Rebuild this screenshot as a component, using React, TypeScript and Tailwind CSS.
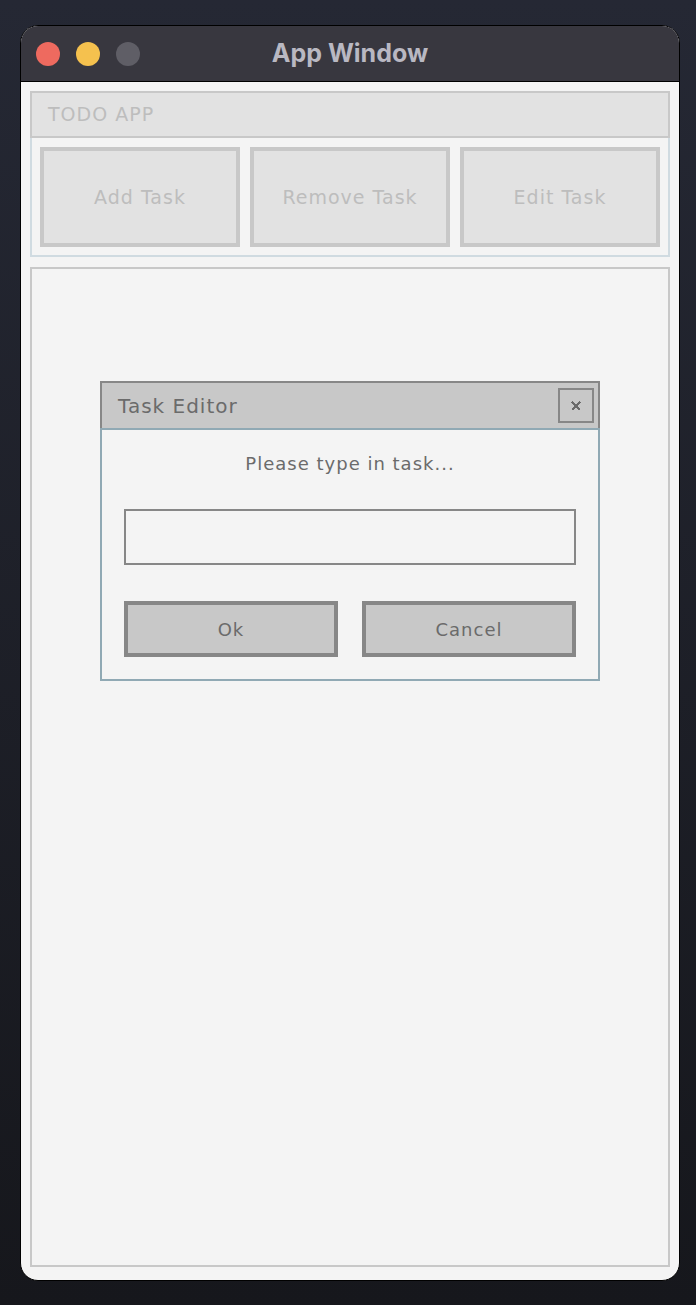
import React from "react";

const pixelFont = { fontFamily: '"DejaVu Sans", "Liberation Sans", sans-serif' };

function ToolButton({ label }: { label: string }) {
  return (
    <button className="h-[100px] w-[200px] border-4 border-[#c8c8c8] bg-[#e2e2e2] text-[19px] tracking-[1px] text-[#bdbdbd]">
      {label}
    </button>
  );
}

function DialogButton({ label }: { label: string }) {
  return (
    <button className="h-[56px] flex-1 border-4 border-[#878787] bg-[#c8c8c8] text-[18px] tracking-[1px] text-[#6b6b6b]">
      {label}
    </button>
  );
}

export default function App() {
  return (
    <div
      className="w-[696px] h-[1305px] bg-gradient-to-b from-[#252834] to-[#16171c] px-[20px] pt-[25px]"
      style={pixelFont}
    >
      <div className="flex h-[1256px] w-[660px] flex-col overflow-hidden rounded-[18px] border border-black bg-[#f4f4f4]">
        {/* title bar */}
        <div className="grid h-[56px] shrink-0 grid-cols-[1fr_auto_1fr] items-center border-b border-black bg-[#38373f] px-[15px]">
          <div className="flex gap-[16px]">
            <span className="h-[24px] w-[24px] rounded-full bg-[#ee6a5f]" />
            <span className="h-[24px] w-[24px] rounded-full bg-[#f5c14e]" />
            <span className="h-[24px] w-[24px] rounded-full bg-[#5f5e66]" />
          </div>
          <h1
            className="text-[25px] font-bold text-[#b9b8c2]"
            style={{ fontFamily: "Inter, 'Liberation Sans', sans-serif" }}
          >
            App Window
          </h1>
          <div />
        </div>

        <div className="flex flex-1 flex-col gap-[10px] px-[9px] pt-[9px] pb-[13px]">
          {/* toolbar panel */}
          <div>
            <div className="flex h-[47px] items-center border-2 border-[#c8c8c8] bg-[#e2e2e2] pl-[16px] text-[19px] tracking-[1px] text-[#bdbdbd]">
              TODO APP
            </div>
            <div className="flex gap-[10px] border-2 border-t-0 border-[#d0dbe1] pt-[9px] pb-[8px] px-[8px]">
              <ToolButton label="Add Task" />
              <ToolButton label="Remove Task" />
              <ToolButton label="Edit Task" />
            </div>
          </div>

          {/* main area */}
          <div className="flex-1 border-2 border-[#c8c8c8] pt-[112px]">
            <div className="mx-auto w-[500px]">
              <div className="flex h-[47px] items-center justify-between border-2 border-b-0 border-[#878787] bg-[#c8c8c8] pl-[16px] pr-[4px]">
                <span className="text-[20px] tracking-[1px] text-[#6b6b6b]">Task Editor</span>
                <button className="flex h-[35px] w-[36px] items-center justify-center border-2 border-[#878787]">
                  <svg width="10" height="10" viewBox="0 0 10 10" shapeRendering="crispEdges">
                    <path d="M1 1 L9 9 M9 1 L1 9" stroke="#6b6b6b" strokeWidth="1.6" />
                  </svg>
                </button>
              </div>
              <div className="flex flex-col border-2 border-[#90a9b4] px-[22px] pt-[22px] pb-[22px]">
                <p className="text-center text-[18px] leading-[24px] tracking-[1px] text-[#6b6b6b]">
                  Please type in task...
                </p>
                <input className="mt-[33px] h-[56px] w-full border-2 border-[#878787] bg-[#f4f4f4] px-2 text-[18px] text-[#6b6b6b] outline-none" />
                <div className="mt-[36px] flex gap-[24px]">
                  <DialogButton label="Ok" />
                  <DialogButton label="Cancel" />
                </div>
              </div>
            </div>
          </div>
        </div>
      </div>
    </div>
  );
}
